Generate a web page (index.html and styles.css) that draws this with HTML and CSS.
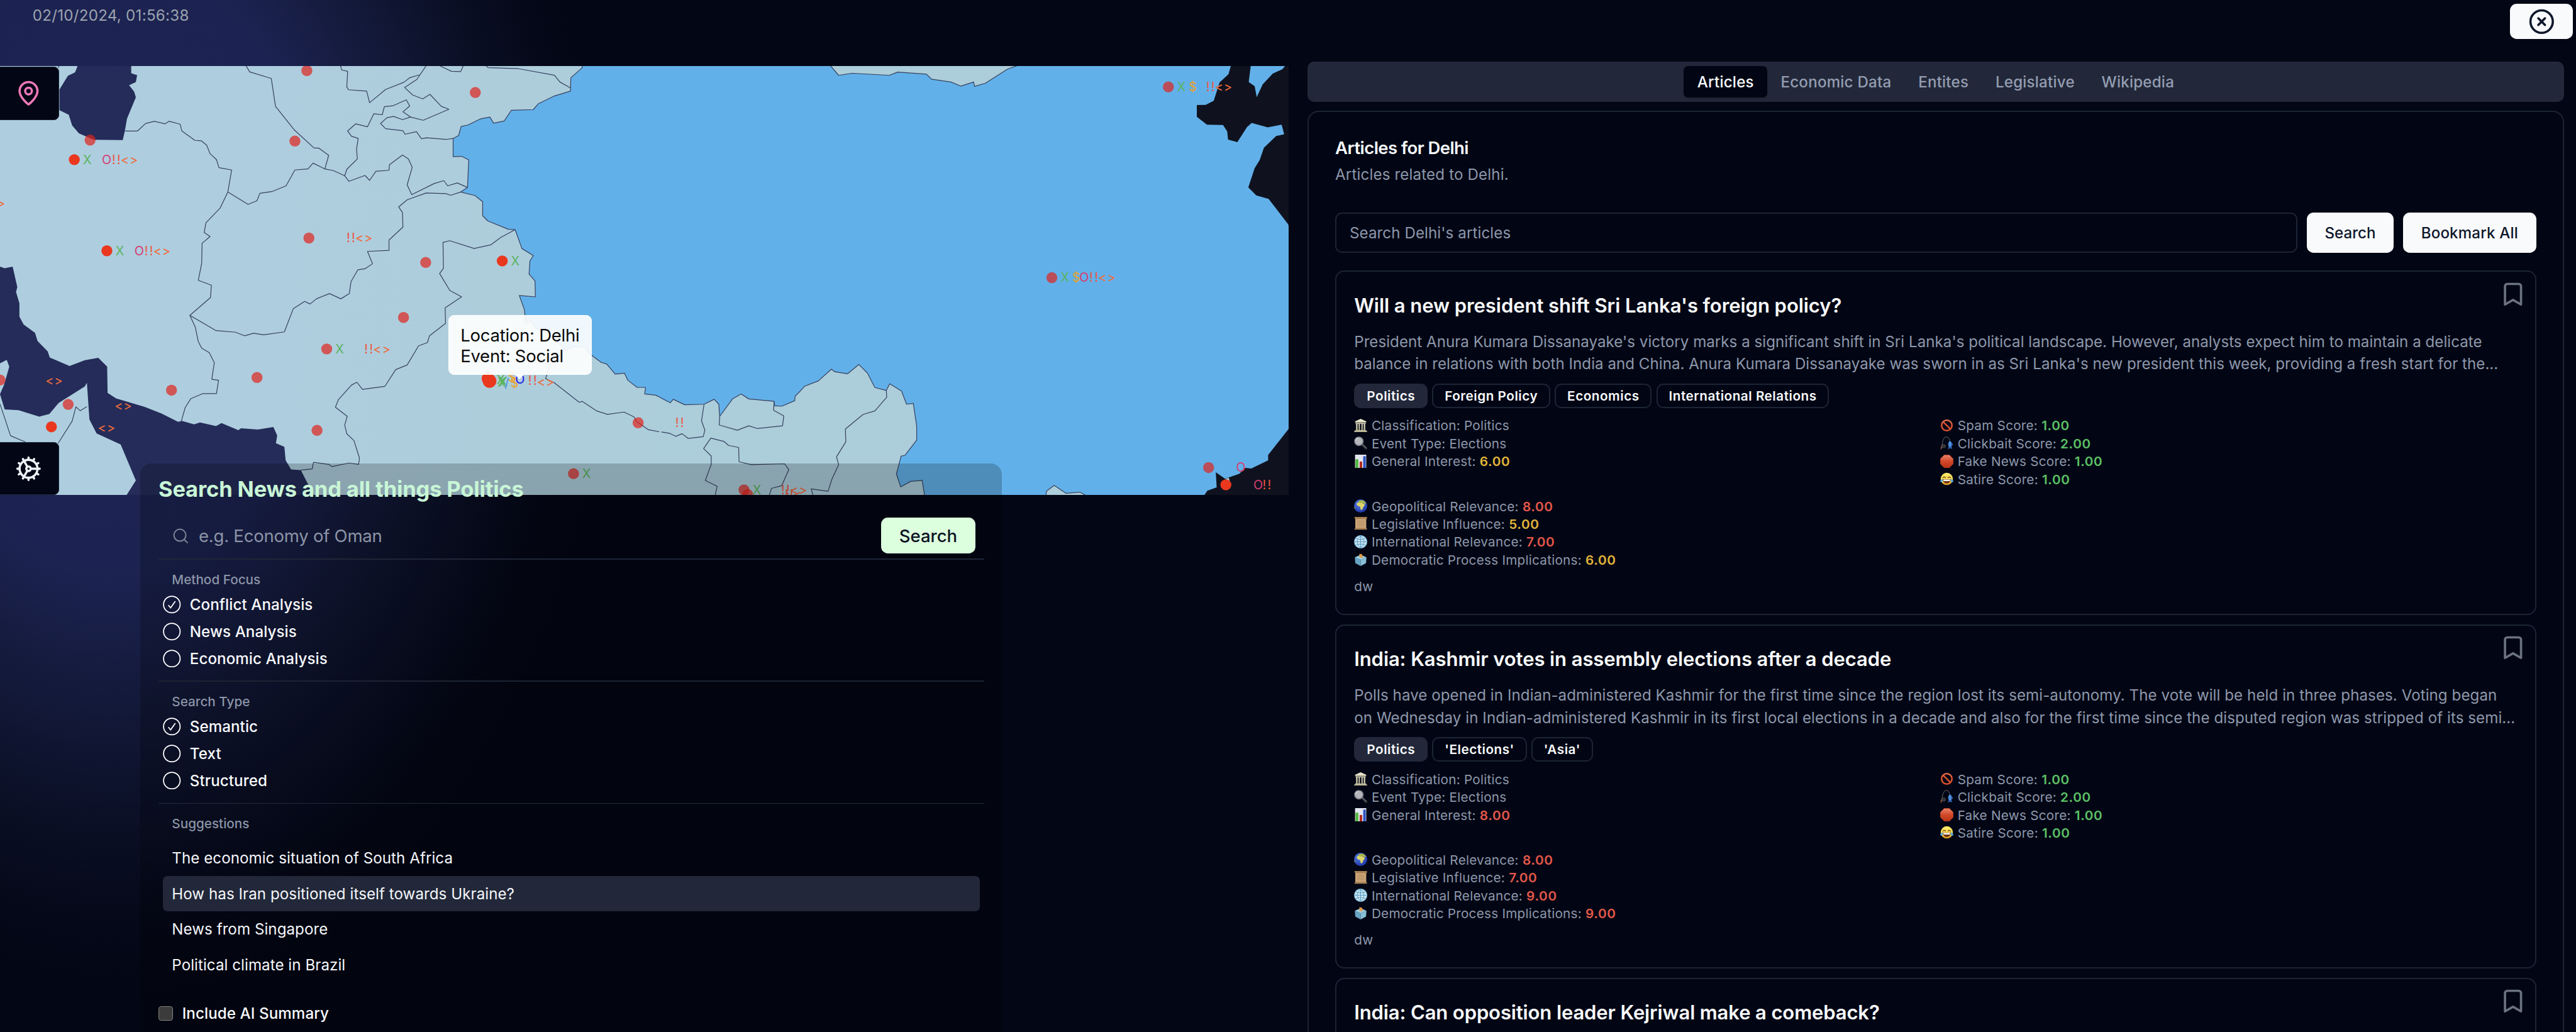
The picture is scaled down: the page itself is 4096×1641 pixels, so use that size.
FILE: index.html
```html
<!DOCTYPE html>
<html lang="en">
<head>
<meta charset="utf-8">
<title>Political news map</title>
<link rel="stylesheet" href="styles.css">
</head>
<body>
<svg class="defs" aria-hidden="true">
  <defs>
    <linearGradient id="stone" x1="0" y1="0" x2="0" y2="1"><stop offset="0" stop-color="#f1edd2"/><stop offset="1" stop-color="#b9b495"/></linearGradient>
    <radialGradient id="ocean" cx=".4" cy=".35" r=".7"><stop offset="0" stop-color="#5b86ec"/><stop offset="1" stop-color="#1b2fa0"/></radialGradient>
    <linearGradient id="redfill" x1="0" y1="0" x2="0" y2="1"><stop offset="0" stop-color="#e9836a"/><stop offset=".5" stop-color="#d1492a"/><stop offset="1" stop-color="#b93316"/></linearGradient>
    <linearGradient id="facefill" x1="0" y1="0" x2="0" y2="1"><stop offset="0" stop-color="#ffee6e"/><stop offset=".7" stop-color="#f8cf42"/><stop offset="1" stop-color="#d98c22"/></linearGradient>
    <symbol id="e-bank" viewBox="0 0 26 26"><path fill="url(#stone)" d="M13 0 24 5v2H2V5zM3 8h20v2H3zM4 10h3v12H4zm5 0h2.500v12H9zm5.500 0H17v12h-2.500zM19 10h3v12h-3zM2 22h22v2H2zM0 24h26v2H0z"/></symbol>
    <symbol id="e-glass" viewBox="0 0 26 26"><path d="m16.500 16.500 7 7" stroke="#2b2c30" stroke-width="5" stroke-linecap="round"/><path d="m16 15 8.500 8" stroke="#85878c" stroke-width="1.400"/><circle cx="9.500" cy="9.500" r="8.300" fill="#b4b6bc" stroke="#808389" stroke-width="2"/><path d="M3 9a6.500 6.500 0 0 1 6-6" stroke="#e4e6ea" stroke-width="1.300" fill="none"/></symbol>
    <symbol id="e-chart" viewBox="0 0 26 26"><path fill="#e3e8f2" d="M2 0h22v26H2z"/><path fill="#4fb53a" d="M3 9h5.500v17H3z"/><path fill="#b32a1c" d="M11 13.500h5V26h-5z"/><path fill="#2c52c0" d="M18 3h5v23h-5z"/></symbol>
    <symbol id="e-earth" viewBox="0 0 26 26"><circle cx="13" cy="13" r="13" fill="url(#ocean)"/><path fill="#ddd56a" d="M5 9c1-3 4-3 7-2.500 2-.5 5 .5 6 1.500l3.500 2.500c-.5 2-2 3-3.500 4.500-.5 2-1 5-3.500 6-2-1-2-4-2.500-6.500C10 13 6 14 5 9z"/><path fill="#a9b846" d="M8 5c2-3 5-3.500 9-3 3 1 5 3 6.500 6-2 1-3 1-5-1-3 0-7 1-10.500-2zM0 15c1.500 0 3 2 2.500 4C1.500 18 .5 17 0 15z"/></symbol>
    <symbol id="e-scroll" viewBox="0 0 26 26"><path fill="#c9a376" d="M2.500 3h21.500v21H2.500z"/><path fill="#a67f53" d="M1 0h24.500v4H4L1 3zM1 23l3-1.500h21.500L25 25H1z"/><path stroke="#a98558" stroke-width=".8" d="M6 8h14M6 11h14M6 14h14M6 17h14"/></symbol>
    <symbol id="e-globe" viewBox="0 0 26 26"><circle cx="13" cy="13" r="12.300" fill="#cfe3ee" stroke="#7fc3e4" stroke-width="1.400"/><path fill="none" stroke="#4f9cc6" stroke-width="1.200" d="M13 1v24M1 13h24M3.500 6.500q9.500 4 19 0M3.500 19.500q9.500-4 19 0M13 1q-14 12 0 24M13 1q14 12 0 24"/></symbol>
    <symbol id="e-ballot" viewBox="0 0 26 26"><path fill="#9bd0e6" d="m1.500 9 11.500-5 11.500 5L13 14z"/><path fill="#68a4c4" d="m1.500 9 11.500 5v12L2.500 20.500z"/><path fill="#87bfd8" d="M24.500 9 13 14v12l10.500-5.500z"/><path fill="#e49a44" d="m10.500 2 5.500 1 1 7.500-6.500-1.500z"/></symbol>
    <symbol id="e-ban" viewBox="0 0 26 26"><circle cx="13" cy="13" r="10.200" fill="none" stroke="#d6502f" stroke-width="3.200"/><path d="m6 6 14 14" stroke="#d6502f" stroke-width="3.200"/><path d="M3.500 8.500a10.500 10.500 0 0 1 19 0" stroke="#ee9880" stroke-width="1" fill="none"/></symbol>
    <symbol id="e-fish" viewBox="0 0 26 26"><path fill="none" stroke="#6a6865" stroke-width="1.200" d="M3 22C4 12 6 1 12 1c5 0 6 4 7 9"/><path stroke="#7b4b38" stroke-width="2.600" d="m1.500 25 2-7"/><circle cx="7" cy="19" r="3.300" fill="#2a2b2e" stroke="#63656a"/><path fill="#4d8fdc" d="M19 9c4 1 5 6 3 11l1.500 4-4-1-4 1.500 1.500-4.500c-2.500-4-1-9 2-11z"/><path fill="#2c5db4" d="m14.500 14 2.500 1.500v3zM23 14l3 1.500-3 3zM16 25l1.500-5h4l2 4.500-4-1.500z"/></symbol>
    <symbol id="e-stop" viewBox="0 0 26 26"><path fill="url(#redfill)" stroke="#c64325" d="M8 .5h10L25.500 8v10L18 25.500H8L.5 18V8z"/></symbol>
    <symbol id="e-joy" viewBox="0 0 26 26"><circle cx="13" cy="13" r="12" fill="url(#facefill)"/><path fill="none" stroke="#6b3f14" stroke-width="1.500" stroke-linecap="round" d="M5.500 10.500q2.500-2.800 5 0M15.500 10.500q2.500-2.800 5 0"/><path fill="#6b3413" d="M5 13.500h16q-1 8.500-8 8.500t-8-8.500z"/><path fill="#fff" d="M6 14.300h14l-1 3H7z"/><path fill="#58aee8" d="M4.500 12.500Q6 19 3 19.500T0 17zM21.500 12.500Q20 19 23 19.500t3-2.500z"/></symbol>
    <symbol id="i-bookmark" viewBox="0 0 24 24"><path fill="none" stroke="currentColor" stroke-width="2" stroke-linecap="round" stroke-linejoin="round" d="m19 21-7-4-7 4V5a2 2 0 0 1 2-2h10a2 2 0 0 1 2 2v16z"/></symbol>
  </defs>
</svg>

<div class="shell">
  <section class="left">
    <header class="clock">02/10/2024, 01:56:38</header>
    <div class="map">
      <svg class="map-svg" viewBox="0 130 2532.600 843" preserveAspectRatio="none">
        <defs>
          <linearGradient id="land" gradientUnits="userSpaceOnUse" x1="0" y1="0" x2="1568" y2="0"><stop offset="0" stop-color="#aecedf"/><stop offset=".4" stop-color="#aecdde"/><stop offset=".8" stop-color="#adcddb"/><stop offset="1" stop-color="#accdda"/></linearGradient>
        </defs>
        <rect x="0" y="130" width="2533" height="843" fill="#62b0e9"/>
        <g transform="scale(.8291 .6378)">
          <path fill="url(#land)" d="M0 203H1380L1380 209 1353 240 1352 281 1314 296 1276 320 1264 338 1212 340 1195 373 1170 380 1161 361 1138 367 1110 385 1093 390 1087 418 1074 427 1074 483 1094 482 1111 493 1108 578 1092 592 1126 603 1144 622 1144 665 1156 681 1205 707 1221 708 1237 766 1264 788 1256 804 1254 845 1268 866 1269 915 1231 911 1243 955 1246 995 1259 989 1269 1011 1299 1030 1327 1062 1341 1079 1359 1068 1387 1071 1396 1089 1425 1117 1438 1122 1458 1153 1480 1150 1488 1172 1510 1194 1530 1194 1528 1214 1554 1218 1568 1227V1530H0Z"/>
          <g class="sea-west">
            <path d="M184 203 178 223 161 234 141 276 141 340 163 354 171 387 187 411 222 431 291 432 296 403 301 366 322 300 318 283 306 263 322 253 325 232 311 226 311 203Z"/>
            <path d="M0 822 11 827 30 822 41 885 38 900 46 935 46 976 56 1000 83 1026 89 1051 113 1083 118 1102 165 1128 201 1110 233 1103 254 1130 255 1211 275 1228 343 1254 382 1274 422 1300 431 1297 460 1308 474 1302 512 1313 525 1304 565 1326 571 1320 611 1324 648 1316 657 1342 654 1366 674 1377 677 1419 690 1447 713 1449 745 1530 298 1530 322 1481 286 1370 229 1336 212 1293 206 1180 201 1191 139 1242 117 1276 93 1284 44 1264 11 1262 0 1215 10 1185 22 1130 16 1109 0 1120Z"/>
          </g>
          <g class="borders">
            <path d="M1380 203V209L1353 240 1352 281 1314 296 1276 320 1264 338 1212 340 1195 373 1170 380 1161 361 1138 367 1110 385 1093 390 1087 418 1074 427 1074 483 1094 482 1111 493 1108 578 1092 592 1126 603 1144 622 1144 665 1156 681 1205 707 1221 708 1237 766 1264 788 1256 804 1254 845 1268 866 1269 915 1231 911 1243 955 1246 995 1259 989 1269 1011 1299 1030 1327 1062 1341 1079 1359 1068 1387 1071 1396 1089 1425 1117 1438 1122 1458 1153 1480 1150 1488 1172 1510 1194 1530 1194 1528 1214 1554 1218 1568 1227"/>
            <path d="M583 203 592 222 643 242 653 328 697 400 744 456 756 457 779 479 770 521"/>
            <path d="M296 404 326 404 345 381 366 374 391 382 401 374 427 383 431 404 462 433 477 434 490 448 498 474 513 492 519 517 549 524 540 592 522 641 488 687 484 717 498 729 479 750 478 812 470 864 501 879 499 917 450 972 463 1009 470 1053 478 1073 496 1087 508 1118 502 1169 518 1172 513 1213 481 1213 452 1229 439 1256 430 1297"/>
            <path d="M540 592 588 630 609 619 616 596 646 590 678 573 699 524 730 521 742 503 770 521 790 526 817 542 827 559 865 541 876 556 891 528 922 525 923 508 954 478 968 490 977 516 965 570 976 600 1029 566 1052 557 1061 573 1084 564 1108 578"/>
            <path d="M817 542 822 522 847 490 845 460 849 427 833 420 824 404 843 382 871 391 886 351 906 354 911 329 932 326 963 308 971 327 955 345 973 361 1003 371 1064 337 1046 328 1019 291 1002 305 978 293 959 270 988 245 1010 203"/>
            <path d="M973 361 954 369 933 359 917 363 902 381 914 397 955 403 960 414 987 406 999 428 1011 425 1057 430 1074 427"/>
            <path d="M807 203 810 216 824 220 822 268 826 277 869 281 876 317 914 276 957 254 971 240 994 231"/>
            <path d="M1042 203 1070 220 1092 221 1098 203M1152 203 1157 209 1229 212 1314 232 1327 253 1352 271M139 203V210"/>
            <path d="M1092 592 1068 602 1057 597 1010 595 965 616 945 638 954 655 955 700 922 740 922 772 871 775 883 813 866 828 848 832 832 868 828 905 808 921 781 905 750 921 735 937 722 929 695 952 674 1023 625 1032 601 1027 580 1035 558 1024 512 1019 450 972"/>
            <path d="M1221 708 1187 732 1163 755 1124 766 1066 742 1050 747 1051 827 1042 843 1066 895 1094 915 1055 949 1056 997 1018 1035 1013 1056 992 1066 965 1125 938 1139 912 1191 859 1200 846 1178 833 1187 802 1232 795 1255 823 1283 817 1310 822 1337 839 1358 852 1412 850 1431 827 1427 787 1438 779 1431 743 1425 740 1445 713 1449"/>
            <path d="M1341 1079 1305 1121 1293 1167 1313 1179 1373 1240 1380 1237 1415 1267 1440 1277 1479 1270 1503 1285 1508 1298 1536 1324 1568 1332"/>
            <path d="M0 1245 25 1343 60 1362M206 1253 190 1266 180 1254 171 1298 138 1366"/>
          </g>
          <g transform="translate(1507.700 156.800) scale(1 .9)">
            <path fill="#accdda" d="M55 1189 81 1205 88 1193 115 1212 161 1210 185 1193 196 1210 198 1252 229 1191 249 1175 267 1192 327 1200 328 1215 345 1217 376 1198 377 1183 400 1148 432 1130 463 1090 471 1099 501 1106 528 1074 548 1103 566 1153 593 1163 601 1140 629 1165 641 1210 657 1207 665 1285 665 1333 637 1385 628 1388 617 1449 627 1493 651 1474 678 1471 684 1525H55Z"/>
            <path class="outlined" d="M460 50 480 84 512 77 600 84 620 73 688 80 700 97 746 107 770 121 800 107 802 122 828 111 880 63 905 50Z"/>
            <path class="outlined" d="M971 1524 973 1507 991 1488 1019 1515 1052 1511 1068 1524Z"/>
            <g class="sea-east">
              <path d="M1410 50 1404 80 1383 108 1369 171 1350 185 1329 186 1329 226 1353 253 1391 254 1401 276 1403 304 1425 313 1448 261 1459 247 1497 262 1530 253 1536 286 1517 292 1488 332 1478 374 1466 402 1451 468 1470 495 1499 507 1545 593 1550 612 1550 50 1539 50 1532 63 1509 78 1485 115 1471 159 1466 121 1452 107 1457 50Z"/>
              <path d="M1550 1288 1498 1384 1498 1402 1458 1430 1443 1428 1430 1448 1396 1465 1374 1443 1376 1495 1354 1506 1345 1525 1550 1525Z"/>
            </g>
            <path fill="#adcddb" d="M1396 1466 1405 1462 1407 1474Z"/>
            <g class="borders">
              <path d="M60 1189 81 1205 88 1193 115 1212 161 1210 185 1193 196 1210 198 1252 229 1191 249 1175 267 1192 327 1200 328 1215 345 1217 376 1198 377 1183 400 1148 432 1130 463 1090 471 1099 501 1106 528 1074 548 1103 566 1153 593 1163 601 1140 629 1165 641 1210 657 1207 665 1285 665 1333 637 1385 628 1388 617 1449 627 1493 651 1474 678 1471 684 1525"/>
              <path d="M60 1305 80 1310 94 1320 109 1311 123 1327 159 1321 163 1299 155 1267 161 1210"/>
              <path d="M198 1252 197 1281 240 1299 267 1284 287 1293 347 1284 350 1250 326 1231 327 1200"/>
              <path d="M187 1525 192 1491 164 1471 178 1416 178 1387 160 1362 177 1326 209 1338 219 1351 243 1358 244 1407 273 1417 352 1414 362 1434 345 1489 321 1498 315 1525"/>
              <path d="M593 1163 594 1186 566 1233 538 1245 496 1295 497 1339 475 1390 480 1417 464 1467 455 1508 415 1500 420 1525"/>
            </g>
          </g>
        </g>
        <g class="dots-dim">
          <circle cx="177" cy="275.500" r="10.800"/><circle cx="579.500" cy="277.500" r="10.800"/><circle cx="603" cy="139" r="10.800"/><circle cx="934" cy="182" r="10.800"/><circle cx="607" cy="468" r="10.800"/><circle cx="836.500" cy="516" r="10.800"/><circle cx="793" cy="624" r="10.800"/><circle cx="642" cy="686" r="10.800"/><circle cx="505" cy="742" r="10.800"/><circle cx="337" cy="767" r="10.800"/><circle cx="134" cy="795" r="10.800"/><circle cx="0" cy="747" r="10.800"/><circle cx="623" cy="846" r="10.800"/><circle cx="1254" cy="831" r="10.800"/><circle cx="1127" cy="931" r="10.800"/><circle cx="2296" cy="171" r="10.800"/><circle cx="2067" cy="546" r="10.800"/><circle cx="2375" cy="919" r="10.800"/><circle cx="1462" cy="963" r="10.800"/><circle cx="1469" cy="972" r="10.800"/>
        </g>
        <g class="dots-hot">
          <circle cx="146" cy="314" r="10.800"/><circle cx="210" cy="493" r="10.800"/><circle cx="987" cy="513" r="10.800"/><circle cx="101" cy="839" r="10.800"/><circle cx="2409" cy="953" r="10.800"/><circle cx="959" cy="744" r="12.500"/><circle cx="962" cy="749" r="13.500"/>
        </g>
        <g class="marks">
          <g transform="translate(146 322.500)"><text class="mx" x="25.500">X</text><text class="mo" x="63.500">O</text><text class="mi" x="84">!!</text><text class="mc" x="109">&lt;&gt;</text></g>
          <g transform="translate(210 501.500)"><text class="mx" x="25.500">X</text><text class="mo" x="63.500">O</text><text class="mi" x="84">!!</text><text class="mc" x="109">&lt;&gt;</text></g>
          <g transform="translate(607 476.500)"><text class="mi" x="84">!!</text><text class="mc" x="109">&lt;&gt;</text></g>
          <g transform="translate(642 694.500)"><text class="mx" x="25.500">X</text><text class="mi" x="84">!!</text><text class="mc" x="109">&lt;&gt;</text></g>
          <g transform="translate(987 521.500)"><text class="mx" x="25.500">X</text></g>
          <g transform="translate(1127 939.500)"><text class="mx" x="25.500">X</text></g>
          <g transform="translate(1254 839.500)"><text class="mi" x="83">!!</text></g>
          <g transform="translate(2296 179.500)"><text class="mx" x="25.500">X</text><text class="md" x="48">$</text><text class="mi" x="84">!!</text><text class="mc" x="109">&lt;&gt;</text></g>
          <g transform="translate(2067 554.500)"><text class="mx" x="25.500">X</text><text class="md" x="48">$</text><text class="mo" x="63.500">O</text><text class="mi" x="84">!!</text><text class="mc" x="109">&lt;&gt;</text></g>
          <g transform="translate(2375 927.500)"><text class="mo" x="63.500">O</text></g>
          <g transform="translate(2409 961.500)"><text class="mo" x="63.500">O</text><text class="mi" x="82">!!</text></g>
          <g transform="translate(1462 971.500)"><text class="mx" x="25.500">X</text><text class="mi" x="83">!!</text><text class="mc" x="108">&lt;&gt;</text></g>
          <g transform="translate(1469 980.500)"><text class="mi" x="83">!!</text><text class="mc" x="99">&lt;</text></g>
          <text class="mc" x="107" y="756">&lt;&gt;</text><text class="mc" x="243" y="805.500">&lt;&gt;</text><text class="mc" x="210" y="849.500">&lt;&gt;</text><text class="mc" x="3" y="408.500">&gt;</text><text class="mc" x="-5" y="351.500">&gt;</text>
          <text class="mx" x="984" y="755.500">X</text><text class="mx" x="989" y="758.500">X</text><text class="mx" x="986" y="760.500">X</text><text class="ms" x="996" y="761">/</text><text class="md" x="1006" y="750">$</text><text class="md" x="1011" y="762">$</text><text class="mb" x="1022" y="754.500">O</text><text class="mi" x="1048" y="757">!!</text><text class="mc" x="1073" y="758.500">&lt;&gt;</text>
        </g>
      </svg>
      <button class="side-btn side-top" aria-label="Locations"><svg viewBox="0 0 24 24"><path d="M20 10c0 6-8 12-8 12s-8-6-8-12a8 8 0 0 1 16 0Z"/><circle cx="12" cy="10" r="3"/></svg></button>
      <button class="side-btn side-bottom" aria-label="Settings"><svg viewBox="0 0 24 24"><path d="M12 20a8 8 0 1 0 0-16 8 8 0 0 0 0 16ZM12 14a2 2 0 1 0 0-4 2 2 0 0 0 0 4ZM12 2v2M12 22v-2M17 20.660l-1-1.730M11 10.270 7 3.340M20.660 17l-1.730-1M3.340 7l1.730 1M14 12h8M2 12h2M20.660 7l-1.730 1M3.340 17l1.730-1M17 3.340l-1 1.730M11 13.730l-4 6.930"/></svg></button>
      <div class="tooltip"><span>Location: Delhi</span><span>Event: Social</span></div>
    </div>

    <div class="search-panel">
      <h1>Search News and all things Politics</h1>
      <div class="query">
        <svg class="lens" viewBox="0 0 24 24"><circle cx="11" cy="11" r="8"/><path d="m21 21-4.300-4.300"/></svg>
        <span class="query-hint">e.g. Economy of Oman</span>
        <button class="go">Search</button>
      </div>
      <div class="group">
        <p class="label">Method Focus</p>
        <div class="radio"><svg viewBox="0 0 16 16"><circle cx="8" cy="8" r="7.400"/><path d="m4.900 8.600 2 2.400 4.200-6"/></svg><span>Conflict Analysis</span></div>
        <div class="radio"><svg viewBox="0 0 16 16"><circle cx="8" cy="8" r="7.400"/></svg><span>News Analysis</span></div>
        <div class="radio"><svg viewBox="0 0 16 16"><circle cx="8" cy="8" r="7.400"/></svg><span>Economic Analysis</span></div>
      </div>
      <div class="group thin">
        <p class="label">Search Type</p>
        <div class="radio"><svg viewBox="0 0 16 16"><circle cx="8" cy="8" r="7.400"/><path d="m4.900 8.600 2 2.400 4.200-6"/></svg><span>Semantic</span></div>
        <div class="radio"><svg viewBox="0 0 16 16"><circle cx="8" cy="8" r="7.400"/></svg><span>Text</span></div>
        <div class="radio"><svg viewBox="0 0 16 16"><circle cx="8" cy="8" r="7.400"/></svg><span>Structured</span></div>
      </div>
      <div class="suggestions">
        <p class="label">Suggestions</p>
        <p class="item">The economic situation of South Africa</p>
        <p class="item active">How has Iran positioned itself towards Ukraine?</p>
        <p class="item">News from Singapore</p>
        <p class="item">Political climate in Brazil</p>
      </div>
      <div class="summary"><i class="box"></i><span>Include AI Summary</span></div>
    </div>
  </section>

  <section class="right">
    <div class="topbar"><button class="close" aria-label="Close"><svg viewBox="0 0 24 24"><circle cx="12" cy="12" r="10"/><path d="m15 9-6 6M9 9l6 6"/></svg></button></div>
    <nav class="tabs">
      <span class="tab on">Articles</span><span class="tab">Economic Data</span><span class="tab">Entites</span><span class="tab">Legislative</span><span class="tab">Wikipedia</span>
    </nav>
    <div class="panel">
      <h2>Articles for Delhi</h2>
      <p class="sub">Articles related to Delhi.</p>
      <div class="filter">
        <div class="field">Search Delhi's articles</div>
        <button class="white b-search">Search</button>
        <button class="white b-all">Bookmark All</button>
      </div>

      <article class="card">
        <svg class="mark"><use href="#i-bookmark"/></svg>
        <h3 class="t1">Will a new president shift Sri Lanka's foreign policy?</h3>
        <p class="desc"><span>President Anura Kumara Dissanayake's victory marks a significant shift in Sri Lanka's political landscape. However, analysts expect him to maintain a delicate</span><span>balance in relations with both India and China. Anura Kumara Dissanayake was sworn in as Sri Lanka's new president this week, providing a fresh start for the...</span></p>
        <div class="tags"><span class="tag solid">Politics</span><span class="tag">Foreign Policy</span><span class="tag">Economics</span><span class="tag">International Relations</span></div>
        <div class="facts">
          <div>
            <p><svg><use href="#e-bank"/></svg>Classification: Politics</p>
            <p><svg><use href="#e-glass"/></svg>Event Type: Elections</p>
            <p><svg><use href="#e-chart"/></svg>General Interest: <b class="mid">6.00</b></p>
          </div>
          <div>
            <p><svg><use href="#e-ban"/></svg>Spam Score: <b class="low">1.00</b></p>
            <p><svg><use href="#e-fish"/></svg>Clickbait Score: <b class="low">2.00</b></p>
            <p><svg><use href="#e-stop"/></svg>Fake News Score: <b class="low">1.00</b></p>
            <p><svg><use href="#e-joy"/></svg>Satire Score: <b class="low">1.00</b></p>
          </div>
          <div>
            <p><svg><use href="#e-earth"/></svg>Geopolitical Relevance: <b class="high">8.00</b></p>
            <p><svg><use href="#e-scroll"/></svg>Legislative Influence: <b class="mid">5.00</b></p>
            <p><svg><use href="#e-globe"/></svg>International Relevance: <b class="high">7.00</b></p>
            <p><svg><use href="#e-ballot"/></svg>Democratic Process Implications: <b class="mid">6.00</b></p>
          </div>
        </div>
        <p class="source">dw</p>
      </article>

      <article class="card">
        <svg class="mark"><use href="#i-bookmark"/></svg>
        <h3 class="t2">India: Kashmir votes in assembly elections after a decade</h3>
        <p class="desc wide"><span>Polls have opened in Indian-administered Kashmir for the first time since the region lost its semi-autonomy. The vote will be held in three phases. Voting began</span><span>on Wednesday in Indian-administered Kashmir in its first local elections in a decade and also for the first time since the disputed region was stripped of its semi...</span></p>
        <div class="tags"><span class="tag solid">Politics</span><span class="tag">'Elections'</span><span class="tag">'Asia'</span></div>
        <div class="facts">
          <div>
            <p><svg><use href="#e-bank"/></svg>Classification: Politics</p>
            <p><svg><use href="#e-glass"/></svg>Event Type: Elections</p>
            <p><svg><use href="#e-chart"/></svg>General Interest: <b class="high">8.00</b></p>
          </div>
          <div>
            <p><svg><use href="#e-ban"/></svg>Spam Score: <b class="low">1.00</b></p>
            <p><svg><use href="#e-fish"/></svg>Clickbait Score: <b class="low">2.00</b></p>
            <p><svg><use href="#e-stop"/></svg>Fake News Score: <b class="low">1.00</b></p>
            <p><svg><use href="#e-joy"/></svg>Satire Score: <b class="low">1.00</b></p>
          </div>
          <div>
            <p><svg><use href="#e-earth"/></svg>Geopolitical Relevance: <b class="high">8.00</b></p>
            <p><svg><use href="#e-scroll"/></svg>Legislative Influence: <b class="high">7.00</b></p>
            <p><svg><use href="#e-globe"/></svg>International Relevance: <b class="high">9.00</b></p>
            <p><svg><use href="#e-ballot"/></svg>Democratic Process Implications: <b class="high">9.00</b></p>
          </div>
        </div>
        <p class="source">dw</p>
      </article>

      <article class="card">
        <svg class="mark"><use href="#i-bookmark"/></svg>
        <h3 class="t3">India: Can opposition leader Kejriwal make a comeback?</h3>
      </article>
    </div>
  </section>
</div>
</body>
</html>
```
FILE: styles.css
```css
html { font-size: 16.183px; }
* { box-sizing: border-box; }
body, h1, h2, h3, p { margin: 0; }
body {
  width: 100vw; height: 100vh; overflow: hidden;
  font-family: Inter, "Liberation Sans", sans-serif;
  color: #f8fafc;
  background: radial-gradient(ellipse 49rem 72rem at 11rem 26rem, #1e2556 0%, #1c2351 42%, #131939 60%, #0a0f25 77%, #050818 90%, #030614 100%);
}
button { border: 0; padding: 0; font: inherit; }
.defs { position: absolute; width: 0; height: 0; }
.shell { display: grid; grid-template-columns: 126.630rem 1fr; height: 100%; overflow: hidden; }

/* left column */
.left { display: flex; flex-direction: column; min-width: 0; }
.clock { height: 6.500rem; flex: none; padding: .450rem 0 0 3.200rem; font-size: 1.490rem; line-height: 2.200rem; letter-spacing: .017rem; color: #9ca3af; }
.map { position: relative; height: 42.150rem; flex: none; }
.map-svg { display: block; width: 100%; height: 100%; }
.sea-west path { fill: #252c59; }
.sea-east path { fill: #0f121e; }
.borders path, .outlined { fill: none; stroke: #36415f; stroke-width: 1.200; vector-effect: non-scaling-stroke; stroke-linejoin: round; }
.outlined { fill: #accdda; }
.dots-dim circle { fill: #e0241c; opacity: .7; }
.dots-hot circle { fill: #ea381e; }
.marks text { font-size: 24.500px; text-anchor: middle; }
.mx { fill: #5bb45e; }
.mo { fill: #d63c74; }
.mi { fill: #ec5540; letter-spacing: 3px; }
.mc { fill: #ee6c3c; letter-spacing: 1.500px; }
.md { fill: #eaa22c; }
.ms { fill: #4b93ee; }
.mb { fill: #1a12f0; }
.side-btn { position: absolute; left: -.1rem; width: 5.900rem; height: 5.220rem; display: grid; place-items: center; background: #020615; border: .1rem solid #1e293b; border-radius: 0 .500rem .500rem 0; color: #ee79b8; }
.side-btn svg { width: 2.640rem; height: 2.640rem; fill: none; stroke: currentColor; stroke-width: 2; stroke-linecap: round; stroke-linejoin: round; margin-left: -.150rem; }
.side-top { top: .080rem; }
.side-bottom { bottom: 0; color: #eef2f7; }
.tooltip { position: absolute; left: 44.050rem; top: 24.450rem; width: 14.100rem; height: 5.900rem; padding: .950rem 1.130rem; display: flex; flex-direction: column; background: rgba(255,255,255,.91); border: .050rem solid #fff; border-radius: .550rem; color: #0a0a0a; font-size: 1.700rem; line-height: 2.010rem; white-space: nowrap; letter-spacing: -.015rem; }
.tooltip::after { content: ""; position: absolute; left: 6.450rem; top: 100%; border: .550rem solid transparent; border-top: .500rem solid #fff; border-bottom: 0; }

.search-panel { position: relative; flex: 1; width: 84.650rem; margin: -3.080rem 0 0 13.780rem; padding: 1.100rem 1.740rem 0 1.790rem; background: rgba(0,0,0,.2); border-radius: 1.100rem 1.100rem 0 0; }
.search-panel h1 { font-size: 2.130rem; line-height: 2.830rem; font-weight: 700; letter-spacing: -.008rem; color: #c8f6d6; white-space: nowrap; }
.query { display: flex; align-items: center; height: 4.570rem; margin-top: .900rem; padding: .040rem .850rem 0 1.320rem; border-bottom: 2px solid #1f2637; }
.lens { width: 1.760rem; height: 1.760rem; fill: none; stroke: #7e8698; stroke-width: 1.700; stroke-linecap: round; }
.query-hint { flex: 1; margin-left: .880rem; font-size: 1.700rem; letter-spacing: -.014rem; color: #8c94a6; }
.go { width: 9.270rem; height: 3.520rem; border-radius: .660rem; background: #dcffde; color: #0b1222; font-size: 1.700rem; font-weight: 500; }
.group { height: 11.990rem; padding: 1.120rem 0 0 .440rem; border-bottom: 2px solid #1d2434; }
.group.thin { border-bottom-width: 1px; border-color: #222a3b; }
.label { font-size: 1.280rem; line-height: 1.760rem; font-weight: 500; color: #8b94a7; margin: 0 0 .250rem .880rem; }
.radio { display: flex; align-items: center; gap: .880rem; height: 2.640rem; font-size: 1.490rem; font-weight: 500; letter-spacing: .006rem; }
.radio svg { width: 1.760rem; height: 1.760rem; fill: none; stroke: #fff; stroke-width: 1; }
.suggestions { padding: 1.120rem .440rem 0; }
.suggestions .label { margin-bottom: .700rem; }
.item { height: 3.520rem; line-height: 3.620rem; padding-left: .880rem; font-size: 1.490rem; letter-spacing: .004rem; color: #f4f6fa; }
.item.active { background: #222839; border-radius: .440rem; }
.summary { display: flex; align-items: center; gap: .880rem; height: 2rem; margin-top: 1.960rem; font-size: 1.490rem; font-weight: 500; letter-spacing: .007rem; }
.box { width: 1.450rem; height: 1.430rem; background: #3b3b3b; border: .110rem solid #858585; border-radius: .280rem; }

/* right column */
.right { display: flex; flex-direction: column; padding: 0 1.170rem 0 1.820rem; min-width: 0; }
.topbar { height: 6.050rem; flex: none; display: flex; justify-content: flex-end; padding-top: .340rem; margin-right: -.860rem; }
.close { width: 6.150rem; height: 3.520rem; border-radius: .660rem; background: #f8fafc; display: grid; place-items: center; }
.close svg { width: 2.640rem; height: 2.640rem; fill: none; stroke: #0f172a; stroke-width: 2; stroke-linecap: round; }
.tabs { flex: none; height: 3.960rem; display: flex; justify-content: center; align-items: center; background: #222839; border-radius: .660rem; }
.tab { height: 3.060rem; line-height: 3.240rem; padding: 0 1.320rem; font-size: 1.490rem; font-weight: 500; letter-spacing: .014rem; border-radius: .440rem; color: #949db2; }
.tab.on { background: #020614; color: #f8fafc; box-shadow: 0 .1rem .2rem rgba(0,0,0,.15); }
.panel { flex: none; height: 100rem; margin-top: .850rem; padding: 2.690rem 2.620rem 0; border: 2px solid #1c2435; border-radius: 1.100rem; background: #020614; }
.panel h2 { font-size: 1.700rem; line-height: 1.760rem; font-weight: 600; letter-spacing: -.034rem; }
.sub { margin-top: .660rem; font-size: 1.490rem; line-height: 2.200rem; letter-spacing: .010rem; color: #8d97ab; }
.filter { display: flex; gap: .920rem; margin-top: 2.600rem; height: 3.960rem; }
.field { flex: 1; line-height: 3.820rem; padding-left: 1.290rem; border: 2px solid #1c2435; border-radius: .660rem; font-size: 1.490rem; letter-spacing: .006rem; color: #8d97ab; }
.white { padding-top: .080rem; background: #f8fafc; color: #0f172a; border-radius: .660rem; font-size: 1.490rem; font-weight: 500; }
.b-search { width: 8.550rem; }
.b-all { width: 13.080rem; letter-spacing: .010rem; }
.card { position: relative; height: 33.820rem; margin-top: .920rem; padding: 2.310rem 1.740rem 0; border: 2px solid #1c2435; border-radius: .880rem; }
.filter + .card { margin-top: 1.740rem; }
.mark { position: absolute; right: .830rem; top: .840rem; width: 2.700rem; height: 2.700rem; color: #6b7280; }
.card h3 { font-size: 1.920rem; line-height: 1.980rem; font-weight: 600; letter-spacing: -.005rem; white-space: nowrap; }
.card .t2 { letter-spacing: -.007rem; }
.card .t3 { letter-spacing: -.009rem; }
.desc { margin-top: 1.490rem; font-size: 1.490rem; line-height: 2.200rem; letter-spacing: .002rem; color: #8d97ab; }
.desc.wide { letter-spacing: .0043rem; }
.desc span { display: block; white-space: nowrap; }
.tags { display: flex; gap: .440rem; margin-top: .780rem; height: 2.420rem; }
.tag { padding: 0 1.100rem 0 1.120rem; line-height: 2.220rem; font-size: 1.280rem; font-weight: 600; letter-spacing: .031rem; border: 2px solid #1c2435; border-radius: .660rem; white-space: nowrap; }
.tag.solid { background: #222839; border-color: #222839; }
.facts { display: grid; grid-template-columns: 1fr 1fr; gap: .880rem; margin-top: .900rem; color: #8d97ab; font-size: 1.280rem; line-height: 1.760rem; letter-spacing: .015rem; }
.facts p { height: 1.760rem; white-space: nowrap; }
.facts svg { width: 1.300rem; height: 1.300rem; margin-right: .410rem; vertical-align: -.150rem; }
.facts b { font-weight: 600; letter-spacing: .040rem; }
.low { color: #5cc065; }
.mid { color: #e3b53a; }
.high { color: #e2574a; }
.source { margin-top: .860rem; font-size: 1.280rem; line-height: 1.760rem; letter-spacing: .020rem; color: #8d97ab; }
```
